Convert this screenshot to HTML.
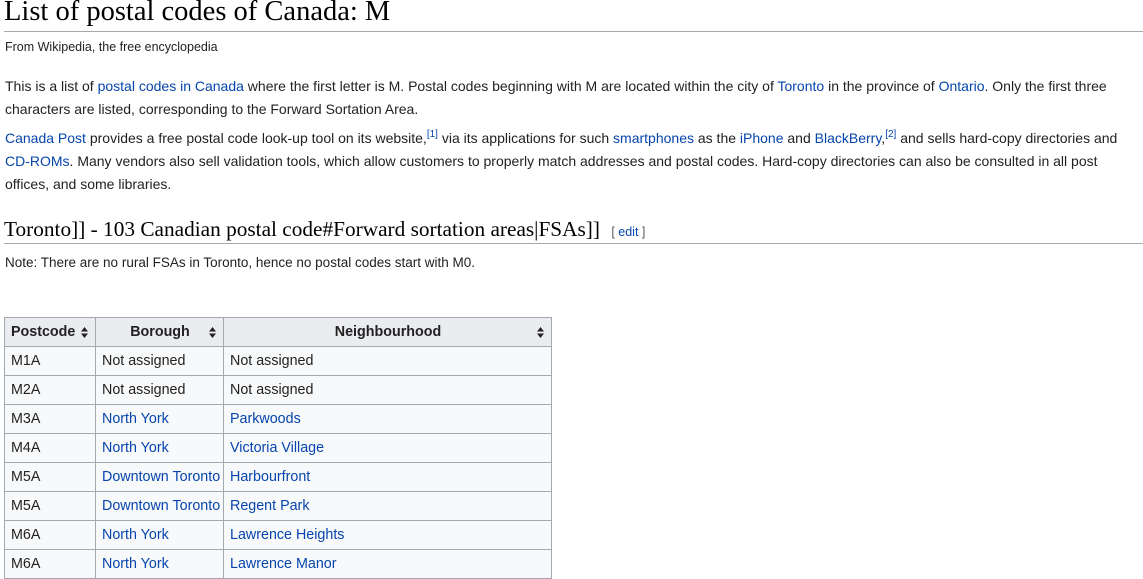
<!DOCTYPE html><html><head><style>
body{margin:0;background:#fff;width:1143px;height:579px;overflow:hidden;position:relative;font-family:"Liberation Sans",sans-serif;color:#222}
.a{position:absolute;white-space:nowrap}
a{color:#0645ad;text-decoration:none}
.p{font-size:14px;left:5px}
sup{font-size:10px;vertical-align:6px;line-height:0}
table{position:absolute;left:4px;top:317px;border-collapse:collapse;font-size:14.3px;table-layout:fixed;width:547px}
td,th{border:1px solid #a2a9b1;height:28px;padding:0 5px 0 6px;text-align:left;background:#f8f9fa;white-space:nowrap;overflow:hidden}
th{background:#eaecf0;text-align:center;position:relative}
th svg{position:absolute;right:7px;top:9px}
</style></head><body>
<div class="a" style="left:4px;top:-4px;font-family:'Liberation Serif',serif;font-size:28.5px;color:#000">List of postal codes of Canada: M</div>
<div class="a" style="left:4px;top:31px;width:1139px;height:1px;background:#a2a9b1"></div>
<div class="a" style="left:5px;top:40px;font-size:12.5px">From Wikipedia, the free encyclopedia</div>
<div class="a p" style="top:78px">This is a list of <a>postal codes in Canada</a> where the first letter is M. Postal codes beginning with M are located within the city of <a>Toronto</a> in the province of <a>Ontario</a>. Only the first three</div>
<div class="a p" style="top:101px">characters are listed, corresponding to the Forward Sortation Area.</div>
<div class="a p" style="top:130px"><a>Canada Post</a> provides a free postal code look-up tool on its website,<sup><a>[1]</a></sup> via its applications for such <a>smartphones</a> as the <a>iPhone</a> and <a>BlackBerry</a>,<sup><a>[2]</a></sup> and sells hard-copy directories and</div>
<div class="a p" style="top:153px"><a>CD-ROMs</a>. Many vendors also sell validation tools, which allow customers to properly match addresses and postal codes. Hard-copy directories can also be consulted in all post</div>
<div class="a p" style="top:176px">offices, and some libraries.</div>
<div class="a" style="left:4px;top:217px;font-family:'Liberation Serif',serif;font-size:21.3px;color:#000">Toronto]] - 103 Canadian postal code#Forward sortation areas|FSAs]] <span style="font-family:'Liberation Sans',sans-serif;font-size:12.5px;color:#54595d;margin-left:6px">[ <a>edit</a> ]</span></div>
<div class="a" style="left:4px;top:243px;width:1139px;height:1px;background:#a2a9b1"></div>
<div class="a p" style="top:255px;font-size:13.5px">Note: There are no rural FSAs in Toronto, hence no postal codes start with M0.</div>
<table>
<colgroup><col style="width:91px"><col style="width:128px"><col style="width:328px"></colgroup>
<tr><th style="text-align:left">Postcode<svg width="7" height="11" viewBox="0 0 7 11"><path d="M3.5 0L7 4.5H0ZM3.5 11L7 6.5H0Z" fill="#222"/></svg></th><th>Borough<svg width="7" height="11" viewBox="0 0 7 11"><path d="M3.5 0L7 4.5H0ZM3.5 11L7 6.5H0Z" fill="#222"/></svg></th><th>Neighbourhood<svg width="7" height="11" viewBox="0 0 7 11"><path d="M3.5 0L7 4.5H0ZM3.5 11L7 6.5H0Z" fill="#222"/></svg></th></tr>
<tr><td>M1A</td><td>Not assigned</td><td>Not assigned</td></tr>
<tr><td>M2A</td><td>Not assigned</td><td>Not assigned</td></tr>
<tr><td>M3A</td><td><a>North York</a></td><td><a>Parkwoods</a></td></tr>
<tr><td>M4A</td><td><a>North York</a></td><td><a>Victoria Village</a></td></tr>
<tr><td>M5A</td><td><a>Downtown Toronto</a></td><td><a>Harbourfront</a></td></tr>
<tr><td>M5A</td><td><a>Downtown Toronto</a></td><td><a>Regent Park</a></td></tr>
<tr><td>M6A</td><td><a>North York</a></td><td><a>Lawrence Heights</a></td></tr>
<tr><td>M6A</td><td><a>North York</a></td><td><a>Lawrence Manor</a></td></tr>
</table>
</body></html>
